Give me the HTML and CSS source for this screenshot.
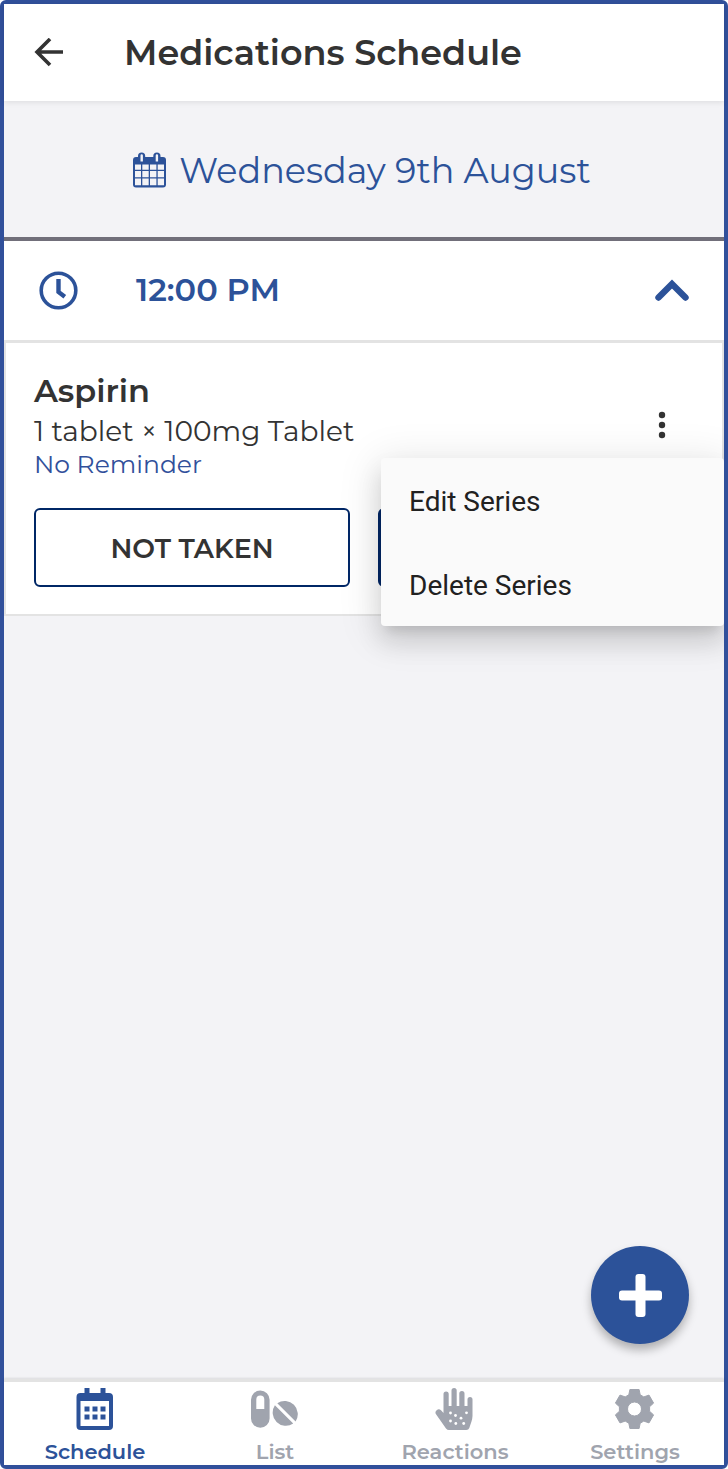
FILE: index.html
```html
<!DOCTYPE html>
<html lang="en">
<head>
<meta charset="utf-8">
<meta name="viewport" content="width=device-width, initial-scale=1">
<title>Medications Schedule</title>
<link rel="stylesheet" href="styles.css">
</head>
<body>
<div class="app">
  <header class="topbar">
    <button class="icon-button" type="button" aria-label="Back">
      <svg width="30" height="30" viewBox="0 0 30 30" fill="none" stroke="currentColor" stroke-width="3.600"><path d="M29 14H4M16 1 3 14l13 13"/></svg>
    </button>
    <h1 class="title">Medications Schedule</h1>
  </header>

  <main class="content">
    <button class="date" type="button">
      <svg width="34" height="36" viewBox="0 0 34 36"><path fill="currentColor" fill-rule="evenodd" d="M3 5h2V4a3.600 3.600 0 0 1 7.200 0v1h8.100V4a3.600 3.600 0 0 1 7.200 0v1H30a3 3 0 0 1 3 3v24.500a3 3 0 0 1-3 3H3a3 3 0 0 1-3-3V8a3 3 0 0 1 3-3zM7.500 3.500v6h2.400v-6a1.200 1.200 0 0 0-2.400 0zm15.200 0v6h2.400v-6a1.200 1.200 0 0 0-2.400 0zM2 12.500v5.200h6v-5.200zm7.300 0v5.200h6.400v-5.200zm7.700 0v5.200h6.400v-5.200zm7.700 0v5.200H31v-5.200zM2 19v6.200h6V19zm7.300 0v6.200h6.400V19zM17 19v6.200h6.400V19zm7.700 0v6.200H31V19zM2 26.500v6.800h6v-6.800zm7.300 0v6.800h6.400v-6.800zm7.700 0v6.800h6.400v-6.800zm7.700 0v6.800H31v-6.800z"/></svg>
      <span>Wednesday 9th August</span>
    </button>

    <button class="slot" type="button" aria-expanded="true">
      <svg width="40" height="40" viewBox="0 0 40 40" fill="none" stroke="currentColor"><circle cx="20.500" cy="20.500" r="17.300" stroke-width="3.600"/><path stroke-width="4.400" d="M20.500 9V22L26.800 26.800"/></svg>
      <span class="slot-time">12:00 PM</span>
      <svg width="36" height="24" viewBox="0 0 36 24" fill="none" stroke="currentColor" stroke-width="6.400" stroke-linecap="round"><path d="M4.500 19.500 18 6l13.500 13.500"/></svg>
    </button>

    <section class="card">
      <div class="card-head">
        <div>
          <h2 class="name">Aspirin</h2>
          <p class="dose">1 tablet × 100mg Tablet</p>
          <p class="reminder">No Reminder</p>
        </div>
        <button class="icon-button more" type="button" aria-label="More options" aria-expanded="true">
          <svg width="8" height="28" viewBox="0 0 8 28" fill="currentColor"><circle cx="4" cy="4" r="3.200"/><circle cx="4" cy="14" r="3.200"/><circle cx="4" cy="24" r="3.200"/></svg>
        </button>
      </div>
      <div class="actions">
        <button class="action" type="button">NOT TAKEN</button>
        <button class="action action-primary" type="button" aria-label="Taken"></button>
      </div>
      <div class="menu" role="menu">
        <button class="menu-item" type="button" role="menuitem">Edit Series</button>
        <button class="menu-item" type="button" role="menuitem">Delete Series</button>
      </div>
    </section>

    <button class="fab" type="button" aria-label="Add medication">
      <svg width="44" height="44" viewBox="0 0 44 44" fill="currentColor"><rect x="17.500" y="1" width="10" height="43" rx="3"/><rect x="1" y="17.500" width="43" height="10" rx="3"/></svg>
    </button>
  </main>

  <nav class="tabs">
    <a class="tab tab-active" href="#schedule">
      <svg width="48" height="46" viewBox="0 0 48 46" fill="currentColor"><path fill-rule="evenodd" d="M13.500 3h5v5h11V3h5v5H38a4 4 0 0 1 4 4v29a4 4 0 0 1-4 4H9.500a4 4 0 0 1-4-4V12a4 4 0 0 1 4-4h4zM9.500 16v25H38V16z"/><path d="M13.500 21.500h5v5h-5zm8 0h5v5h-5zm8 0h5v5h-5zm-16 8h5v5h-5zm8 0h5v5h-5zm8 0h5v5h-5z"/></svg>
      <span>Schedule</span>
    </a>
    <a class="tab" href="#list">
      <svg width="48" height="46" viewBox="0 0 48 46" fill="currentColor"><path fill-rule="evenodd" d="M9.300 5.500a9.300 9.300 0 0 1 9.300 9.300v18.700a9.300 9.300 0 0 1-18.600 0V14.800a9.300 9.300 0 0 1 9.300-9.300zM5.300 24h8v-9.500a4 4 0 0 0-8 0z"/><path d="M23.900 20.300a13.200 13.200 0 0 0 18.300 18.300zM26.300 18.200a13.200 13.200 0 0 1 18.300 18.300z"/></svg>
      <span>List</span>
    </a>
    <a class="tab" href="#reactions">
      <svg width="48" height="46" viewBox="0 0 48 46"><path fill="currentColor" d="M12.500 28V9a2.600 2.600 0 0 1 5.200 0v12h2.800V5.500a2.600 2.600 0 0 1 5.200 0V21h2.600V8.500a2.600 2.600 0 0 1 5.200 0V21h3v-6.500a2.500 2.500 0 0 1 5 0V31c0 4-2 8-3.200 12q-.7 2-3 2H18q-1.800 0-3-1.600L5.200 29.500a3.200 3.200 0 0 1 4.800-4.200z"/><g fill="#fff"><circle cx="19.500" cy="28" r="1.400"/><circle cx="24.500" cy="30.500" r="1.400"/><circle cx="35.500" cy="27.800" r="1.400"/><circle cx="30" cy="33.200" r="1.400"/><circle cx="19.500" cy="36" r="1.400"/><circle cx="24.800" cy="38.500" r="1.400"/><circle cx="32.700" cy="38.500" r="1.400"/></g></svg>
      <span>Reactions</span>
    </a>
    <a class="tab" href="#settings">
      <svg width="48" height="46" viewBox="0 0 48 46"><path fill="currentColor" stroke="currentColor" stroke-linejoin="round" fill-rule="evenodd" d="M18.900 4.500h9.200l1.100 5.300 3.600 2.100 5.200-1.800 4.600 8-4 3.600v4.600l4 3.600-4.600 8-5.200-1.800-3.600 2.100-1.100 5.300h-9.200l-1.100-5.300-3.600-2.100-5.200 1.800-4.600-8 4-3.600v-4.600l-4-3.600 4.600-8 5.200 1.800 3.600-2.100zM23.500 17a7 7 0 1 0 0 14 7 7 0 0 0 0-14z"/></svg>
      <span>Settings</span>
    </a>
  </nav>
</div>
</body>
</html>
```
FILE: styles.css
```css
* {
  box-sizing: border-box;
}

body {
  margin: 0;
  background: #fff;
  color: #333;
  font-family: Montserrat, Inter, "Open Sans", sans-serif;
}

button {
  margin: 0;
  padding: 0;
  border: 0;
  background: none;
  color: inherit;
  font: inherit;
}

svg {
  display: block;
  flex: none;
}

h1, h2, p {
  margin: 0;
}

.app {
  display: flex;
  flex-direction: column;
  min-height: 100vh;
  border: 4px solid #31509b;
  border-radius: 6px;
  background: #f3f3f6;
}

.topbar {
  position: relative;
  z-index: 1;
  display: flex;
  align-items: center;
  gap: 60px;
  height: 97px;
  padding: 0 30px;
  background: #fff;
  box-shadow: 0 1px 6px rgba(0, 0, 0, 0.1);
}

.title {
  font-size: 35px;
  font-weight: 600;
  line-height: 48px;
}

.content {
  position: relative;
  display: flex;
  flex: 1;
  flex-direction: column;
  overflow: hidden;
}

.date {
  display: flex;
  align-items: center;
  justify-content: center;
  gap: 12px;
  height: 140px;
  padding: 2px 4px 0 0;
  border-bottom: 4px solid #716f7a;
  color: #2c5299;
  font-size: 35px;
  font-weight: 400;
}

.slot {
  display: flex;
  align-items: center;
  height: 102px;
  padding: 0 34px 2px;
  border-bottom: 3px solid #e3e3e3;
  background: #fff;
  color: #2c5299;
}

.slot-time {
  flex: 1;
  padding-left: 58px;
  font-size: 32px;
  font-weight: 600;
  text-align: left;
}

.card {
  position: relative;
  padding: 28px 28px 27px;
  border: 2px solid #e3e3e3;
  border-top: 0;
  background: #fff;
}

.card-head {
  display: flex;
  align-items: center;
  justify-content: space-between;
}

.name {
  font-size: 32px;
  font-weight: 600;
  line-height: 40px;
}

.dose {
  font-size: 28px;
  font-weight: 400;
  line-height: 40px;
}

.reminder {
  color: #31509b;
  font-size: 25px;
  font-weight: 400;
  line-height: 26px;
}

.more {
  padding: 2px 28px 0;
}

.actions {
  display: grid;
  grid-template-columns: 1fr 1fr;
  gap: 28px;
  margin-top: 31px;
}

.action {
  height: 79px;
  padding-top: 2px;
  border: 2px solid #002766;
  border-radius: 6px;
  font-size: 27px;
  font-weight: 600;
}

.action-primary {
  background: #002766;
}

.menu {
  position: absolute;
  top: 115px;
  right: -2px;
  width: 343px;
  border-radius: 4px;
  background: #fafafa;
  box-shadow: 0 10px 10px -6px rgba(0, 0, 0, 0.1), 0 16px 24px 2px rgba(0, 0, 0, 0.1), 0 6px 40px 5px rgba(0, 0, 0, 0.1);
}

.menu-item {
  display: block;
  width: 100%;
  height: 84px;
  padding: 2px 28px 0;
  color: #212121;
  font-family: Roboto, sans-serif;
  font-size: 28px;
  text-align: left;
}

.fab {
  position: absolute;
  right: 35px;
  bottom: 35px;
  display: flex;
  align-items: center;
  justify-content: center;
  width: 98px;
  height: 98px;
  border-radius: 50%;
  background: #2c5299;
  box-shadow: 0 6px 10px rgba(0, 0, 0, 0.28);
  color: #fff;
}

.tabs {
  display: grid;
  grid-template-columns: repeat(4, 1fr);
  height: 86px;
  border-top: 3px solid #e3e3e3;
  background: #fff;
  box-shadow: 0 -1px 2px rgba(0, 0, 0, 0.1);
}

.tab {
  display: flex;
  flex-direction: column;
  align-items: center;
  gap: 7px;
  padding: 3px 0 0 2px;
  color: #a0a4ae;
  font-size: 21px;
  font-weight: 600;
  line-height: 28px;
  text-decoration: none;
}

.tab-active {
  color: #2c5299;
}
```
